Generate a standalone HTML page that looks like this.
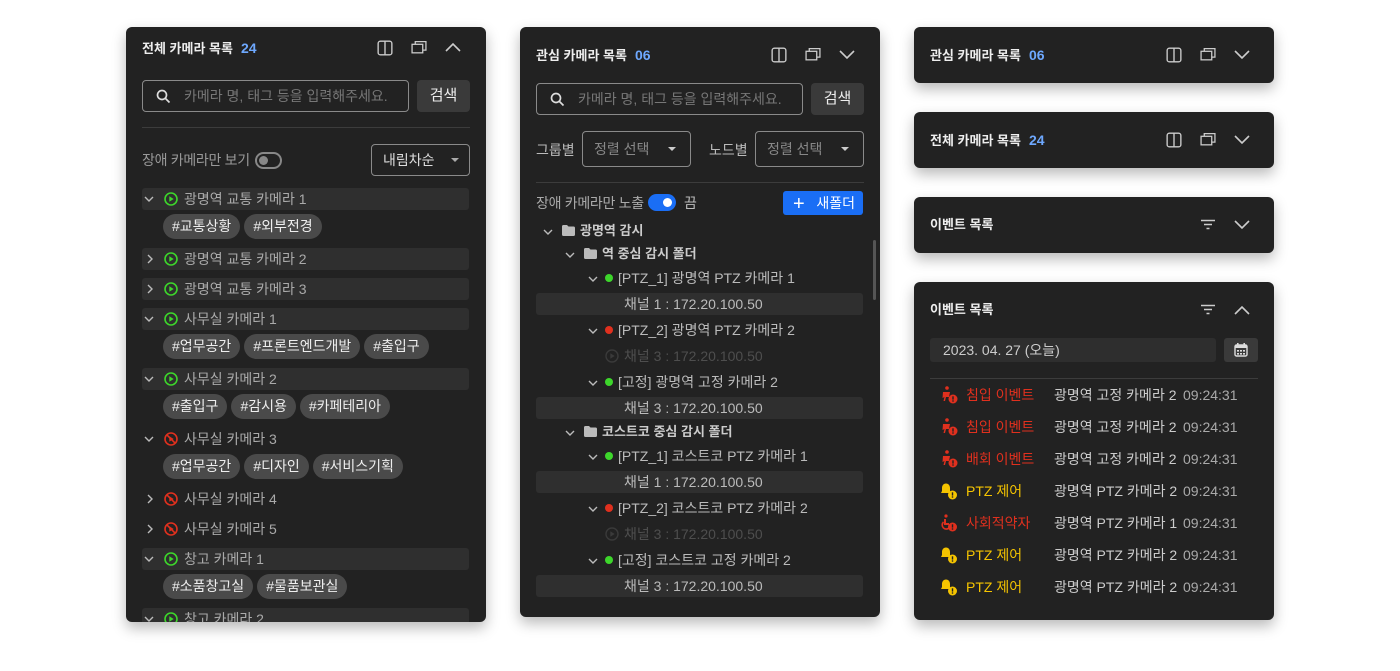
<!DOCTYPE html>
<html><head><meta charset="utf-8"><style>
*{margin:0;padding:0;box-sizing:border-box}
body{width:1400px;height:671px;background:#fff;position:relative;overflow:hidden;font-family:"Liberation Sans","Noto Sans CJK KR",sans-serif;color:#ddd}
.p{position:absolute;background:#222;border-radius:6px;box-shadow:0 6px 14px rgba(0,0,0,.28);overflow:hidden}
.a{position:absolute;white-space:nowrap}
.t{font-size:13px;font-weight:700;color:#eee;line-height:16px}
.n{color:#6ea8fe;font-weight:700;font-size:14px;margin-left:8px}
.ic{position:absolute}
.box{position:absolute;border:1px solid #8a8a8a;border-radius:4px}
.btn{position:absolute;background:#3a3a3a;border-radius:4px;color:#eee;font-size:15px;text-align:center}
.ph{font-size:14px;color:#777}
.tag{display:inline-block;height:25px;line-height:25px;border-radius:13px;background:#4a4a4a;color:#eee;font-size:14px;padding:0 9px;margin-right:4px}
#ov{position:absolute;left:0;top:0;width:1400px;height:671px;z-index:5}
</style></head><body>

<!-- Panel 1 -->
<div class="p" style="left:126px;top:27px;width:360px;height:595px">
 <div class="a t" style="left:16px;top:13px">전체 카메라 목록<span class="n">24</span></div>
 <svg class="ic" style="left:251px;top:13px" width="16" height="16" viewBox="0 0 14 14" fill="none" stroke="#ccc" stroke-width="1.2"><rect x="1" y="1" width="12" height="12" rx="2"/><line x1="7" y1="1" x2="7" y2="13"/></svg>
 <svg class="ic" style="left:285px;top:13px" width="16" height="15" viewBox="0 0 15 14" fill="none" stroke="#ccc" stroke-width="1.2"><rect x="1" y="4" width="10" height="8"/><path d="M4 4V1.5h10v8h-3"/></svg>
 <svg class="ic" style="left:319px;top:15px" width="16" height="10" viewBox="0 0 16 10" fill="none" stroke="#ccc" stroke-width="1.6"><path d="M1 9l7-7 7 7"/></svg>
 <div class="box" style="left:16px;top:53px;width:267px;height:32px"></div>
 <svg class="ic" style="left:30px;top:62px" width="15" height="15" viewBox="0 0 15 15" fill="none" stroke="#ddd" stroke-width="1.7"><circle cx="6" cy="6" r="4.5"/><path d="M9.5 9.5l4 4"/></svg>
 <div class="a ph" style="left:58px;top:59px">카메라 명, 태그 등을 입력해주세요.</div>
 <div class="btn" style="left:291px;top:53px;width:53px;height:32px;line-height:32px">검색</div>
 <div class="a" style="left:16px;top:100px;width:328px;height:1px;background:#3c3c3c"></div>
 <div class="a" style="left:16px;top:123px;font-size:14px;color:#999;letter-spacing:-0.3px">장애 카메라만 보기</div>
 <div class="a" style="left:129px;top:125px;width:27px;height:17px;border:2px solid #888;border-radius:9px"><div style="position:absolute;left:2px;top:2px;width:9px;height:9px;border-radius:50%;background:#888"></div></div>
 <div class="box" style="left:245px;top:117px;width:99px;height:32px;font-size:14px;color:#ddd;line-height:30px;padding-left:11px">내림차순<span style="position:absolute;right:10px;top:13px;border:4px solid transparent;border-top:4px solid #aaa"></span></div>
</div>

<!-- Panel 2 -->
<div class="p" style="left:520px;top:27px;width:360px;height:590px">
 <div class="a t" style="left:16px;top:20px">관심 카메라 목록<span class="n">06</span></div>
 <svg class="ic" style="left:251px;top:20px" width="16" height="16" viewBox="0 0 14 14" fill="none" stroke="#ccc" stroke-width="1.2"><rect x="1" y="1" width="12" height="12" rx="2"/><line x1="7" y1="1" x2="7" y2="13"/></svg>
 <svg class="ic" style="left:285px;top:20px" width="16" height="15" viewBox="0 0 15 14" fill="none" stroke="#ccc" stroke-width="1.2"><rect x="1" y="4" width="10" height="8"/><path d="M4 4V1.5h10v8h-3"/></svg>
 <svg class="ic" style="left:319px;top:23px" width="16" height="10" viewBox="0 0 16 10" fill="none" stroke="#ccc" stroke-width="1.6"><path d="M1 1l7 7 7-7"/></svg>
 <div class="box" style="left:16px;top:56px;width:267px;height:32px"></div>
 <svg class="ic" style="left:30px;top:65px" width="15" height="15" viewBox="0 0 15 15" fill="none" stroke="#ddd" stroke-width="1.7"><circle cx="6" cy="6" r="4.5"/><path d="M9.5 9.5l4 4"/></svg>
 <div class="a ph" style="left:58px;top:62px">카메라 명, 태그 등을 입력해주세요.</div>
 <div class="btn" style="left:291px;top:56px;width:53px;height:32px;line-height:32px">검색</div>
 <div class="a" style="left:16px;top:113px;font-size:14px;color:#bbb">그룹별</div>
 <div class="box" style="left:62px;top:104px;width:109px;height:36px;font-size:14px;color:#888;line-height:34px;padding-left:11px">정렬 선택<span style="position:absolute;right:14px;top:15px;border:4px solid transparent;border-top:4px solid #ccc"></span></div>
 <div class="a" style="left:189px;top:113px;font-size:14px;color:#bbb">노드별</div>
 <div class="box" style="left:235px;top:104px;width:109px;height:36px;font-size:14px;color:#888;line-height:34px;padding-left:11px">정렬 선택<span style="position:absolute;right:14px;top:15px;border:4px solid transparent;border-top:4px solid #ccc"></span></div>
 <div class="a" style="left:16px;top:155px;width:328px;height:1px;background:#3c3c3c"></div>
 <div class="a" style="left:16px;top:166px;font-size:14px;color:#aaa;letter-spacing:-0.3px">장애 카메라만 노출</div>
 <div class="a" style="left:128px;top:167px;width:28px;height:17px;background:#1a6ef5;border-radius:9px"><div style="position:absolute;right:4px;top:4px;width:9px;height:9px;border-radius:50%;background:#fff"></div></div>
 <div class="a" style="left:164px;top:166px;font-size:14px;color:#bbb">끔</div>
 <div class="a" style="left:263px;top:164px;width:80px;height:24px;background:#1a6ef5;border-radius:3px;color:#fff;font-size:14px;line-height:24px;padding-left:10px"><span style="font-size:20px;font-weight:300;vertical-align:-2px">+</span>&nbsp;&nbsp;&nbsp;새폴더</div>
 <div class="a" style="left:353px;top:213px;width:3px;height:60px;background:#555;border-radius:2px"></div>
</div>

<!-- Panel 3 -->
<div class="p" style="left:914px;top:27px;width:360px;height:56px">
 <div class="a t" style="left:16px;top:20px">관심 카메라 목록<span class="n">06</span></div>
 <svg class="ic" style="left:252px;top:20px" width="16" height="16" viewBox="0 0 14 14" fill="none" stroke="#ccc" stroke-width="1.2"><rect x="1" y="1" width="12" height="12" rx="2"/><line x1="7" y1="1" x2="7" y2="13"/></svg>
 <svg class="ic" style="left:286px;top:20px" width="16" height="15" viewBox="0 0 15 14" fill="none" stroke="#ccc" stroke-width="1.2"><rect x="1" y="4" width="10" height="8"/><path d="M4 4V1.5h10v8h-3"/></svg>
 <svg class="ic" style="left:320px;top:23px" width="16" height="10" viewBox="0 0 16 10" fill="none" stroke="#ccc" stroke-width="1.6"><path d="M1 1l7 7 7-7"/></svg>
</div>
<div class="p" style="left:914px;top:112px;width:360px;height:56px">
 <div class="a t" style="left:16px;top:20px">전체 카메라 목록<span class="n">24</span></div>
 <svg class="ic" style="left:252px;top:20px" width="16" height="16" viewBox="0 0 14 14" fill="none" stroke="#ccc" stroke-width="1.2"><rect x="1" y="1" width="12" height="12" rx="2"/><line x1="7" y1="1" x2="7" y2="13"/></svg>
 <svg class="ic" style="left:286px;top:20px" width="16" height="15" viewBox="0 0 15 14" fill="none" stroke="#ccc" stroke-width="1.2"><rect x="1" y="4" width="10" height="8"/><path d="M4 4V1.5h10v8h-3"/></svg>
 <svg class="ic" style="left:320px;top:23px" width="16" height="10" viewBox="0 0 16 10" fill="none" stroke="#ccc" stroke-width="1.6"><path d="M1 1l7 7 7-7"/></svg>
</div>
<div class="p" style="left:914px;top:197px;width:360px;height:56px">
 <div class="a t" style="left:16px;top:20px">이벤트 목록</div>
 <svg class="ic" style="left:287px;top:22px" width="14" height="11" viewBox="0 0 14 11" fill="none" stroke="#ccc" stroke-width="1.4"><path d="M0 1.5h14M3 5.5h8M5.5 9.5h3"/></svg>
 <svg class="ic" style="left:320px;top:23px" width="16" height="10" viewBox="0 0 16 10" fill="none" stroke="#ccc" stroke-width="1.6"><path d="M1 1l7 7 7-7"/></svg>
</div>
<div class="p" style="left:914px;top:282px;width:360px;height:338px">
 <div class="a t" style="left:16px;top:20px">이벤트 목록</div>
 <svg class="ic" style="left:287px;top:22px" width="14" height="11" viewBox="0 0 14 11" fill="none" stroke="#ccc" stroke-width="1.4"><path d="M0 1.5h14M3 5.5h8M5.5 9.5h3"/></svg>
 <svg class="ic" style="left:320px;top:23px" width="16" height="10" viewBox="0 0 16 10" fill="none" stroke="#ccc" stroke-width="1.6"><path d="M1 9l7-7 7 7"/></svg>
 <div class="a" style="left:16px;top:56px;width:286px;height:24px;background:#2e2e2e;border-radius:3px;font-size:14px;color:#ccc;line-height:24px;padding-left:13px">2023. 04. 27 (오늘)</div>
 <div class="a" style="left:310px;top:56px;width:34px;height:24px;background:#3a3a3a;border-radius:3px"><svg style="position:absolute;left:10px;top:5px" width="14" height="14" viewBox="0 0 14 14" fill="#ddd"><rect x="1" y="2" width="12" height="11" rx="1.5" fill="none" stroke="#ddd" stroke-width="1.4"/><rect x="1" y="2" width="12" height="3"/><rect x="3" y="0" width="1.6" height="3"/><rect x="9.4" y="0" width="1.6" height="3"/><rect x="3" y="7" width="2" height="1.6"/><rect x="6" y="7" width="2" height="1.6"/><rect x="9" y="7" width="2" height="1.6"/><rect x="3" y="10" width="2" height="1.6"/><rect x="6" y="10" width="2" height="1.6"/><rect x="9" y="10" width="2" height="1.6"/></svg></div>
 <div class="a" style="left:16px;top:96px;width:328px;height:1px;background:#3c3c3c"></div>
</div>

<div id="ov"></div>

<script>
var green='<svg width="14" height="14" viewBox="0 0 14 14"><circle cx="7" cy="7" r="6" fill="none" stroke="#3dd62b" stroke-width="1.6"/><path d="M5.3 4.2v5.6l4.4-2.8z" fill="#3dd62b"/></svg>';
var red='<svg width="14" height="14" viewBox="0 0 14 14"><circle cx="7" cy="7" r="6" fill="none" stroke="#e0301e" stroke-width="1.6"/><path d="M5.3 4.2v5.6l4.4-2.8z" fill="#e0301e"/><path d="M2.8 2.8l8.4 8.4" stroke="#e0301e" stroke-width="1.6"/></svg>';
var cd='<svg width="10" height="6" viewBox="0 0 10 6" fill="none" stroke="#bbb" stroke-width="1.4"><path d="M1 1l4 4 4-4"/></svg>';
var cr='<svg width="6" height="10" viewBox="0 0 6 10" fill="none" stroke="#bbb" stroke-width="1.4"><path d="M1 1l4 4-4 4"/></svg>';
var h='';
function A(x,y,s,st){h+='<div class="a" style="left:'+x+'px;top:'+y+'px;'+(st||'')+'">'+s+'</div>';}
var rows=[[188,1,1,'광명역 교통 카메라 1',['#교통상황','#외부전경']],[248,1,0,'광명역 교통 카메라 2'],[278,1,0,'광명역 교통 카메라 3'],[308,1,1,'사무실 카메라 1',['#업무공간','#프론트엔드개발','#출입구']],[368,1,1,'사무실 카메라 2',['#출입구','#감시용','#카페테리아']],[428,0,1,'사무실 카메라 3',['#업무공간','#디자인','#서비스기획']],[488,0,0,'사무실 카메라 4'],[518,0,0,'사무실 카메라 5'],[548,1,1,'창고 카메라 1',['#소품창고실','#물품보관실']],[608,1,1,'창고 카메라 2']];
var clip='';
rows.forEach(function(r){
 var y=r[0];
 if(r[1]) clip+='<div class="a" style="left:16px;top:'+(y-27)+'px;width:327px;height:22px;background:#2f2f2f;border-radius:3px"></div>';
 clip+='<div class="a" style="left:'+(r[2]?18:21)+'px;top:'+(y-27+(r[2]?8:6))+'px;line-height:0">'+(r[2]?cd:cr)+'</div>';
 clip+='<div class="a" style="left:38px;top:'+(y-27+4)+'px;line-height:0">'+(r[1]?green:red)+'</div>';
 clip+='<div class="a" style="left:58px;top:'+(y-27+1)+'px;font-size:14px;color:#aaa;line-height:20px">'+r[3]+'</div>';
 if(r[4]){var t='';r[4].forEach(function(g){t+='<span class="tag">'+g+'</span>'});clip+='<div class="a" style="left:37px;top:'+(y-27+26)+'px">'+t+'</div>';}
});
h+='<div class="a" style="left:126px;top:27px;width:360px;height:595px;overflow:hidden;border-radius:6px">'+clip+'</div>';
var fold='<svg width="13" height="11" viewBox="0 0 13 11"><path d="M0 1.5Q0 0 1.5 0H5l1.5 1.5h5Q13 1.5 13 3v6.5Q13 11 11.5 11h-10Q0 11 0 9.5z" fill="#bbb"/></svg>';
function cdx(x,y){A(x,y,cd,'line-height:0');}
cdx(543,229);A(562,225,fold,'line-height:0');A(580,221,'광명역 감시','font-size:13px;font-weight:700;color:#ccc;line-height:20px');
cdx(565,252);A(584,248,fold,'line-height:0');A(602,244,'역 중심 감시 폴더','font-size:13px;font-weight:700;color:#ccc;line-height:20px');
function cam(y,col,txt){cdx(588,y-2);A(605,y-4,'<div style="width:8px;height:8px;border-radius:50%;background:'+col+'"></div>','line-height:0');A(618,y-10,txt,'font-size:14px;color:#bbb;line-height:20px');}
function chn(y,n){A(536,y-11,'채널 '+n+' : 172.20.100.50','width:327px;height:22px;background:#2f2f2f;border-radius:3px;font-size:14px;color:#bbb;line-height:22px;padding-left:88px');}
function dim(y){A(605,y-7,'<svg width="14" height="14" viewBox="0 0 14 14"><circle cx="7" cy="7" r="6" fill="none" stroke="#3a3a3a" stroke-width="1.4"/><path d="M5.3 4.2v5.6l4.4-2.8z" fill="#3a3a3a"/></svg>','line-height:0');A(624,y-10,'채널 3 : 172.20.100.50','font-size:14px;color:#4e4e4e;line-height:20px');}
cam(278,'#3dd62b','[PTZ_1] 광명역 PTZ 카메라 1');chn(304,1);
cam(330,'#e0301e','[PTZ_2] 광명역 PTZ 카메라 2');dim(356);
cam(382,'#3dd62b','[고정] 광명역 고정 카메라 2');chn(408,3);
cdx(565,430);A(584,426,fold,'line-height:0');A(602,422,'코스트코 중심 감시 폴더','font-size:13px;font-weight:700;color:#ccc;line-height:20px');
cam(456,'#3dd62b','[PTZ_1] 코스트코 PTZ 카메라 1');chn(482,1);
cam(508,'#e0301e','[PTZ_2] 코스트코 PTZ 카메라 2');dim(534);
cam(560,'#3dd62b','[고정] 코스트코 고정 카메라 2');chn(586,3);
var man='<svg width="18" height="18" viewBox="0 0 18 18"><circle cx="7" cy="2" r="1.8" fill="#e0301e"/><path d="M3 6h7l-1 5H6l-1 4H3.5l1-4-2 1z" fill="#e0301e"/><circle cx="13" cy="13" r="4.5" fill="#e0301e"/><rect x="12.3" y="10.3" width="1.4" height="3.3" fill="#222"/><rect x="12.3" y="14.3" width="1.4" height="1.4" fill="#222"/></svg>';
var bell='<svg width="18" height="18" viewBox="0 0 18 18"><path d="M6 1.5c-2.5 0-4 2-4 4.5v3L1 11h10l-1-2V6c0-2.5-1.5-4.5-4-4.5z" fill="#f5c400"/><circle cx="12.5" cy="13" r="4.5" fill="#f5c400"/><rect x="11.8" y="10.3" width="1.4" height="3.3" fill="#222"/><rect x="11.8" y="14.3" width="1.4" height="1.4" fill="#222"/></svg>';
var wc='<svg width="18" height="18" viewBox="0 0 18 18"><circle cx="6" cy="2" r="1.6" fill="#e0301e"/><path d="M5 5v5h4" stroke="#e0301e" stroke-width="2" fill="none"/><path d="M3.5 8A4 4 0 1 0 9 14" stroke="#e0301e" stroke-width="1.6" fill="none"/><circle cx="12.5" cy="13" r="4.5" fill="#e0301e"/><rect x="11.8" y="10.3" width="1.4" height="3.3" fill="#222"/><rect x="11.8" y="14.3" width="1.4" height="1.4" fill="#222"/></svg>';
var ev=[[man,'red','침입 이벤트','광명역 고정 카메라 2'],[man,'red','침입 이벤트','광명역 고정 카메라 2'],[man,'red','배회 이벤트','광명역 고정 카메라 2'],[bell,'yel','PTZ 제어','광명역 PTZ 카메라 2'],[wc,'red','사회적약자','광명역 PTZ 카메라 1'],[bell,'yel','PTZ 제어','광명역 PTZ 카메라 2'],[bell,'yel','PTZ 제어','광명역 PTZ 카메라 2']];
ev.forEach(function(e,i){var y=395+32*i;A(940,y-9,e[0],'line-height:0');A(966,y-10,e[2],'font-size:14px;line-height:20px;color:'+(e[1]=='red'?'#e0301e':'#f5c400'));A(1054,y-10,e[3],'font-size:14px;line-height:20px;color:#ccc');A(1183,y-10,'09:24:31','font-size:14px;line-height:20px;color:#aaa');});
document.getElementById('ov').innerHTML=h;
</script>
</body></html>
